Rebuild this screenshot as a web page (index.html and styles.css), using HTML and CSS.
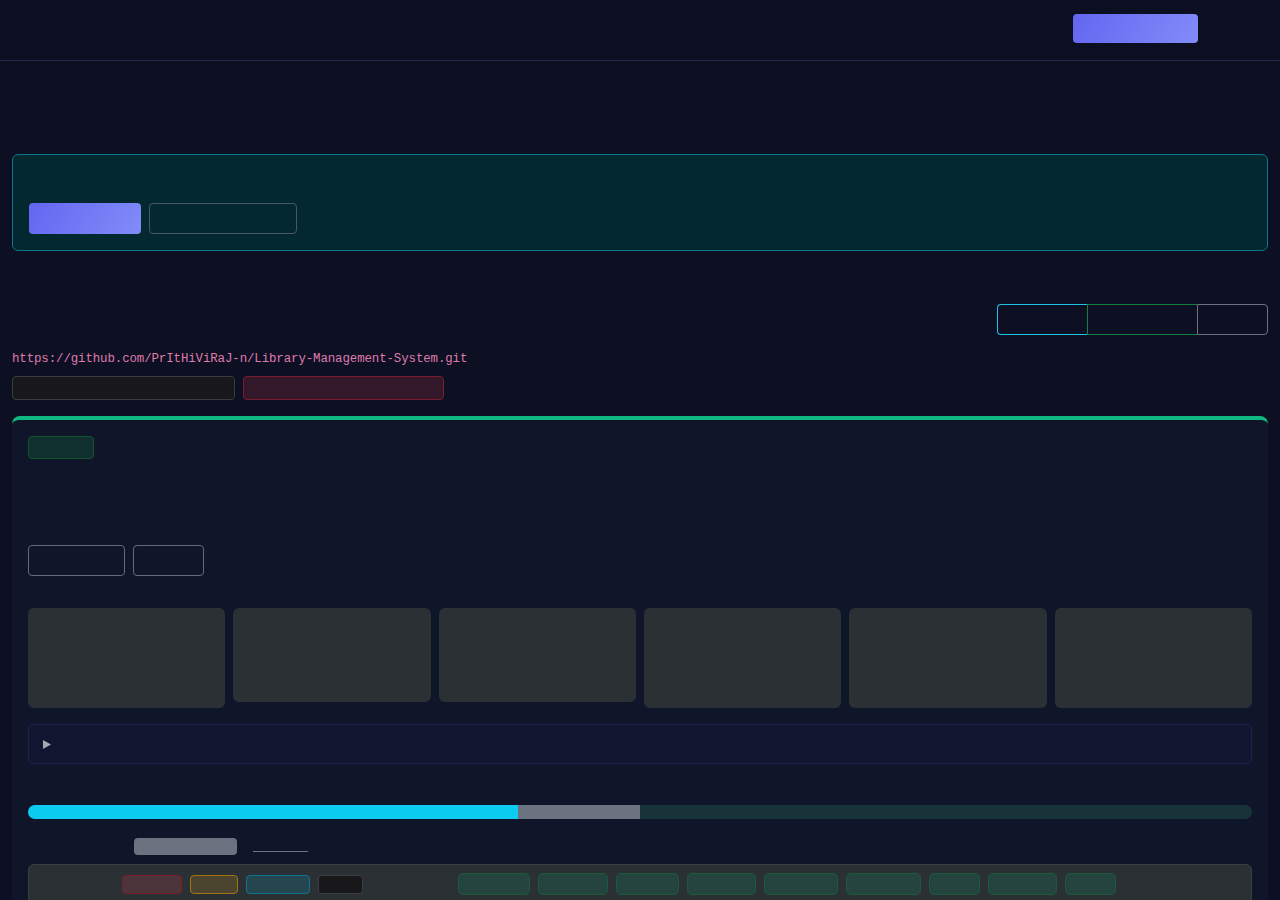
FILE: index.html
```html
<!DOCTYPE html>
<html lang="en">
<head>
<meta charset="utf-8">
<title>Repository</title>
<link rel="stylesheet" href="styles.css">
</head>
<body>
<header class="topbar">
  <div class="btn-primary btn-header"></div>
</header>
<main class="content">
  <section class="notice">
    <div class="btn-primary btn-notice"></div>
    <div class="btn-outline btn-notice-alt"></div>
  </section>

  <div class="tabs-row">
    <div class="tab tab-a"></div>
    <div class="tab tab-b"></div>
    <div class="tab tab-c"></div>
  </div>

  <div class="repo-url">https://github.com/PrItHiViRaJ-n/Library-Management-System.git</div>
  <div class="repo-actions">
    <div class="chip chip-dark"></div>
    <div class="chip chip-danger"></div>
  </div>

  <section class="panel">
    <div class="badge"></div>
    <div class="panel-actions">
      <div class="btn-outline btn-a"></div>
      <div class="btn-outline btn-b"></div>
    </div>
    <div class="stats">
      <div class="stat"></div>
      <div class="stat stat-short"></div>
      <div class="stat stat-short"></div>
      <div class="stat"></div>
      <div class="stat"></div>
      <div class="stat"></div>
    </div>
    <div class="disclosure">
      <svg class="marker" width="8" height="9" viewBox="0 0 8 9"><polygon points="0,0 8,4.5 0,9" fill="#a3a8b3"/></svg>
    </div>
    <div class="progress">
      <div class="progress-fill" style="width:40.03%"></div>
      <div class="progress-mid" style="width:9.97%"></div>
    </div>
    <div class="meta-row">
      <span class="meta-label"></span>
      <span class="meta-pill"></span>
      <span class="meta-link"></span>
    </div>
    <div class="tagbox">
      <div class="tag-row">
        <div class="tag-group">
          <span class="tag tag-red"></span>
          <span class="tag tag-amber"></span>
          <span class="tag tag-cyan"></span>
          <span class="tag tag-black"></span>
        </div>
        <div class="tag-group tags-green">
          <span class="gtag"></span>
          <span class="gtag"></span>
          <span class="gtag"></span>
          <span class="gtag"></span>
          <span class="gtag"></span>
          <span class="gtag"></span>
          <span class="gtag"></span>
          <span class="gtag"></span>
          <span class="gtag"></span>
        </div>
      </div>
    </div>
  </section>
</main>
</body>
</html>
```

FILE: styles.css
```css
* { box-sizing: border-box; }

body {
  margin: 0;
  background: #0d0f23;
  font-family: "Inter", "Liberation Sans", sans-serif;
  color: #e5e7eb;
}

.topbar {
  height: 61px;
  background: #0c0e21;
  border-bottom: 1px solid #26284d;
  display: flex;
  justify-content: flex-end;
  align-items: flex-start;
  padding: 14px 82px 0 0;
}

.btn-primary {
  border-radius: 4px;
  background: linear-gradient(120deg, #6366f1, #818cf8);
}

.btn-header { width: 125px; height: 29px; }

.content { padding: 93px 12px 0; }

.notice {
  height: 97px;
  border: 1px solid #0e7490;
  border-radius: 6px;
  background: #032830;
  padding: 48px 16px 0;
  display: flex;
  gap: 8px;
  align-items: flex-start;
}

.btn-notice { width: 112px; height: 31px; }

.btn-outline {
  height: 31px;
  border: 1px solid #4b5563;
  border-radius: 4px;
}

.btn-notice-alt { width: 148px; }

.tabs-row {
  margin-top: 53px;
  display: flex;
  justify-content: flex-end;
}

.tab { height: 31px; border: 1px solid; }
.tab-a { width: 90px; border-color: #1fc3e6; border-right: none; border-radius: 4px 0 0 4px; }
.tab-b { width: 110px; border-color: #15803d; border-right: none; }
.tab-c { width: 71px; border-color: #6b7280; border-radius: 0 4px 4px 0; }

.repo-url {
  margin: 14px 0 6px;
  font-family: "Liberation Mono", monospace;
  font-size: 12.45px;
  letter-spacing: -0.12px;
  line-height: 21px;
  color: #df7bad;
}

.repo-actions { display: flex; gap: 8px; }

.chip { height: 24px; border: 1px solid; border-radius: 4px; }
.chip-dark { width: 223px; background: #18181a; border-color: #3a3b40; }
.chip-danger { width: 201px; background: #33182a; border-color: #7a1d2e; }

.panel {
  margin-top: 16px;
  background: #10162a;
  border-top: 4px solid #10b981;
  border-radius: 8px 8px 0 0;
  padding: 16px 16px 40px;
}

.badge {
  width: 66px;
  height: 23px;
  background: #10302e;
  border: 1px solid #15532f;
  border-radius: 4px;
}

.panel-actions { margin-top: 86px; display: flex; gap: 8px; }
.panel-actions .btn-outline { border-color: #646a78; }
.btn-a { width: 97px; }
.btn-b { width: 71px; }

.stats {
  margin-top: 32px;
  display: grid;
  grid-template-columns: repeat(6, 1fr);
  gap: 8px;
  align-items: start;
}

.stat { height: 100px; background: #2b3035; border-radius: 6px; }
.stat-short { height: 94px; }

.disclosure {
  margin-top: 16px;
  height: 40px;
  background: #111530;
  border: 1px solid #1f204d;
  border-radius: 4px;
  display: flex;
  align-items: center;
  padding-left: 14px;
}

.marker { display: block; }

.progress {
  margin-top: 41px;
  height: 14px;
  border-radius: 7px;
  background: #18323a;
  display: flex;
  overflow: hidden;
}

.progress-fill { background: #0ccbf0; }
.progress-mid { background: #6b7280; }

.meta-row {
  margin-top: 19px;
  display: flex;
  align-items: flex-start;
  gap: 8px;
  height: 17px;
}

.meta-label { width: 98px; }
.meta-pill { width: 103px; height: 17px; background: #6b7280; border-radius: 4px; }
.meta-link { margin-left: 8px; width: 55px; height: 14px; border-bottom: 1px solid #6b7280; }

.tagbox {
  margin-top: 9px;
  background: #2b3035;
  border: 1px solid #3a3f46;
  border-radius: 6px;
  padding: 8px 0 40px;
}

.tag-row {
  display: flex;
  align-items: center;
  gap: 95px;
  padding-left: 93px;
}

.tag-group { display: flex; align-items: center; gap: 8px; }

.tag { height: 19px; border: 1px solid; border-radius: 4px; }
.tag-red { width: 60px; background: #4b353a; border-color: #7f1d2d; }
.tag-amber { width: 48px; background: #4b452f; border-color: #a3740f; }
.tag-cyan { width: 64px; background: #26464f; border-color: #0e7490; }
.tag-black { width: 45px; background: #18181a; border-color: #3d3e42; }

.gtag {
  height: 22px;
  background: #25443f;
  border: 1px solid #1a5a3a;
  border-radius: 5px;
}

.gtag:nth-child(1) { width: 72px; }
.gtag:nth-child(2) { width: 70px; }
.gtag:nth-child(3) { width: 63px; }
.gtag:nth-child(4) { width: 69px; }
.gtag:nth-child(5) { width: 74px; }
.gtag:nth-child(6) { width: 75px; }
.gtag:nth-child(7) { width: 51px; }
.gtag:nth-child(8) { width: 69px; }
.gtag:nth-child(9) { width: 51px; }
```
